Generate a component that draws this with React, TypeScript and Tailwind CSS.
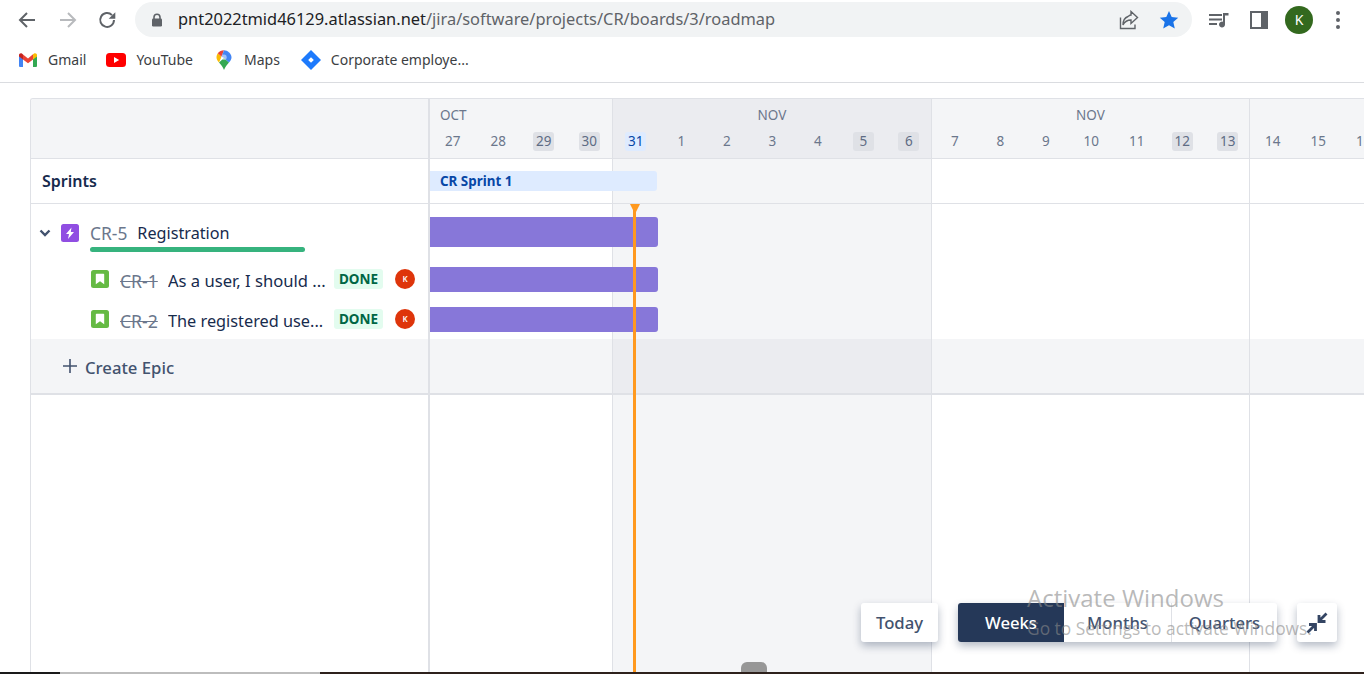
import React from "react";

const FONT = "font-['Noto_Sans','Open_Sans',sans-serif]";

function Day({ d, kind }: { d: string; kind?: "we" | "today" }) {
  return (
    <div className="w-[45.5px] shrink-0 flex justify-center">
      <span
        className={
          "h-[19px] w-[21px] rounded-[3px] flex items-center justify-center pt-[1px] text-[13.5px] leading-none " +
          (kind === "we"
            ? "bg-[#dfe1e6] text-[#5e6c84]"
            : kind === "today"
              ? "bg-[#deebff] text-[#0747a6]"
              : "text-[#6b778c]")
        }
      >
        {d}
      </span>
    </div>
  );
}

function WeekCol({
  width,
  month,
  monthLeft,
  days,
  shaded,
  last,
}: {
  width: string;
  month?: string;
  monthLeft?: boolean;
  days: { d: string; kind?: "we" | "today" }[];
  shaded?: boolean;
  last?: boolean;
}) {
  const bodyBg = shaded ? "bg-[#f4f5f7]" : "bg-white";
  const border = last ? "" : "border-r border-[#dfe1e6]";
  return (
    <div className={width + " flex flex-col " + (last ? "flex-1 min-w-0 overflow-hidden" : "shrink-0")}>
      <div className={"h-[60px] border-b border-[#dfe1e6] flex flex-col " + border + " " + (shaded ? "bg-[#ebecf0]" : "bg-[#f4f5f7]")}>
        <div className={"h-[33px] pt-[7px] text-[13.5px] leading-[18px] text-[#6b778c] " + (monthLeft ? "pl-[10px]" : "text-center")}>
          {month}
        </div>
        <div className="flex">
          {days.map((x) => (
            <Day key={x.d} d={x.d} kind={x.kind} />
          ))}
        </div>
      </div>
      <div className={"h-[45px] border-b border-[#dfe1e6] " + border + " " + bodyBg} />
      <div className={"h-[135px] " + border + " " + bodyBg} />
      <div className={"h-[56px] border-b-2 border-[#dfe1e6] " + border + " " + (shaded ? "bg-[#ebecf0]" : "bg-[#f4f5f7]")} />
      <div className={"flex-1 " + border + " " + bodyBg} />
    </div>
  );
}

function StoryIcon() {
  return (
    <svg width="18" height="18" viewBox="0 0 18 18" className="shrink-0">
      <rect width="18" height="18" rx="2.5" fill="#65ba43" />
      <path d="M5.5 3.8h7a.7.7 0 0 1 .7.7v9.7L9 11.2l-4.2 3V4.5a.7.7 0 0 1 .7-.7z" fill="#fff" />
    </svg>
  );
}

function StoryRow({ id, title, titleSize }: { id: string; title: string; titleSize: string }) {
  return (
    <div className="h-[40px] flex items-center pl-[60px]">
      <StoryIcon />
      <span className="ml-[11px] pt-[3px] w-[48px] shrink-0 text-[17.6px] leading-[24px] text-[#6b778c] line-through">{id}</span>
      <span className={"w-[166px] pt-[3px] shrink-0 leading-[24px] text-[#172b4d] whitespace-nowrap overflow-hidden " + titleSize}>{title}</span>
      <span className="h-[20px] w-[49px] shrink-0 rounded-[3px] bg-[#e3fcef] text-[#006644] text-[13.5px] font-bold flex items-center justify-center">
        DONE
      </span>
      <span className="ml-[12px] h-[20px] w-[20px] shrink-0 rounded-full bg-[#de350b] text-white text-[8px] font-semibold flex items-center justify-center">
        K
      </span>
    </div>
  );
}

function Bookmark({ icon, label, gap }: { icon: React.ReactNode; label: string; gap: string }) {
  return (
    <div className={"flex items-center " + gap}>
      {icon}
      <span className="text-[14px] text-[#3c4043] leading-none whitespace-nowrap">{label}</span>
    </div>
  );
}

export default function App() {
  return (
    <div className={"h-[674px] w-[1364px] overflow-hidden flex flex-col bg-white relative " + FONT}>
      {/* Browser toolbar */}
      <div className="h-[39px] shrink-0 flex items-center pl-[17px]">
        <svg width="20" height="20" viewBox="0 0 20 20" fill="none" stroke="#5f6368" strokeWidth="2">
          <path d="M18 10H3M10 3l-7 7 7 7" />
        </svg>
        <svg width="20" height="20" viewBox="0 0 20 20" fill="none" stroke="#b8babd" strokeWidth="2" className="ml-[21px]">
          <path d="M2 10h15M10 3l7 7-7 7" />
        </svg>
        <svg width="20" height="20" viewBox="0 0 20 20" fill="none" className="ml-[20px]">
          <path d="M16 10a6.9 6.9 0 1 1-2-4.9" stroke="#5f6368" strokeWidth="2" />
          <path d="M17.3 2.2v6.6h-6.6z" fill="#5f6368" />
        </svg>
        <div className="ml-[17px] h-[35px] w-[1057px] rounded-full bg-[#f1f3f4] flex items-center pl-[16px] pr-[13px]">
          <svg width="12" height="14" viewBox="0 0 12 14" className="shrink-0">
            <path d="M3 6V4.2a3 3 0 0 1 6 0V6" fill="none" stroke="#5f6368" strokeWidth="1.6" />
            <rect x="1" y="5.5" width="10" height="8" rx="1.2" fill="#5f6368" />
          </svg>
          <div className="ml-[15px] text-[16.4px] leading-none whitespace-nowrap text-[#5f6368]">
            <span className="text-[#202124]">pnt2022tmid46129.atlassian.net</span>/jira/software/projects/CR/boards/3/roadmap
          </div>
          <div className="ml-auto flex items-center">
            <svg width="20" height="20" viewBox="0 0 20 20" fill="none" stroke="#5f6368" strokeWidth="1.4">
              <path d="M1.5 7.5v11h14.5v-4M9 6.5C5 8 4 11.5 4 15c1.500-3 4-5 8-5v3.500l6.500-6L12 1.500V5c-1 0-2 .8-3 1.500z" />
            </svg>
            <svg width="20" height="20" viewBox="0 0 20 20" className="ml-[20px]">
              <path d="M10 1l2.700 6.100 6.500.6-4.900 4.400 1.500 6.500L10 15.200l-5.800 3.400 1.500-6.500L.8 7.700l6.500-.6z" fill="#1a73e8" />
            </svg>
          </div>
        </div>
        <svg width="22" height="18" viewBox="0 0 22 18" fill="#5f6368" className="ml-[16px]">
          <path d="M1 3h13v2H1zM1 7.500h13v2H1zM1 12h8v2H1z" />
          <path d="M15 2h5.500v2.500H17V13.500a3 3 0 1 1-2-2.800z" />
        </svg>
        <svg width="18" height="18" viewBox="0 0 18 18" className="ml-[20px]">
          <path d="M0 0h18v18H0z" fill="#5f6368" />
          <path d="M2 2h9v14H2z" fill="#fff" />
        </svg>
        <div className="ml-[17px] h-[28px] w-[28px] rounded-full bg-[#33691e] text-white text-[14px] flex items-center justify-center">
          K
        </div>
        <div className="ml-[23px] flex flex-col gap-[3px]">
          <span className="h-[4px] w-[4px] rounded-full bg-[#5f6368]" />
          <span className="h-[4px] w-[4px] rounded-full bg-[#5f6368]" />
          <span className="h-[4px] w-[4px] rounded-full bg-[#5f6368]" />
        </div>
      </div>

      {/* Bookmarks */}
      <div className="h-[44px] shrink-0 border-b border-[#dadce0] flex items-center pl-[19px] pb-[2px]">
        <Bookmark
          gap="gap-[11px]"
          label="Gmail"
          icon={
            <svg width="18" height="14" viewBox="0 0 18 14">
              <path d="M0 2.500V13a1 1 0 0 0 1 1h3V6z" fill="#4285f4" />
              <path d="M18 2.500V13a1 1 0 0 1-1 1h-3V6z" fill="#34a853" />
              <path d="M14 1.200V6.500L18 3.500V2c0-1.500-1.700-2.300-2.900-1.500z" fill="#fbbc04" />
              <path d="M4 6.500V1.500L9 5.500l5-4.300v5.300L9 10.300z" fill="#ea4335" />
              <path d="M0 2v1.500l4 3V1.500L2.900.500C1.700-.300 0 .500 0 2z" fill="#c5221f" />
            </svg>
          }
        />
        <div className="ml-[20px]">
          <Bookmark
            gap="gap-[10px]"
            label="YouTube"
            icon={
              <svg width="20" height="14" viewBox="0 0 20 14">
                <rect width="20" height="14" rx="3.500" fill="#f00" />
                <path d="M8 4l5.200 3L8 10z" fill="#fff" />
              </svg>
            }
          />
        </div>
        <div className="ml-[23px]">
          <Bookmark
            gap="gap-[12px]"
            label="Maps"
            icon={
              <svg width="16" height="20" viewBox="0 0 16 20">
                <path d="M8 20c-1-3-3-5-5-7.500L8 8l5 4.500C11 15 9 17 8 20z" fill="#34a853" />
                <path d="M1.800 3.200L5.500 6.800 3 12.500C1.500 10.800.5 9 .5 7.500c0-1.700.5-3.100 1.300-4.300z" fill="#fbbc04" />
                <path d="M1.800 3.200C3.200 1.300 5.400.2 8 .2L5.500 6.800z" fill="#ea4335" />
                <path d="M8 .2c1.800 0 3.700.7 5 2L10.500 9 5.500 6.800z" fill="#4285f4" />
                <path d="M13 2.200c1.500 1.400 2.500 3.300 2.500 5.300 0 1.700-1 3.300-2.500 5L8 8z" fill="#4285f4" />
                <circle cx="8" cy="7.300" r="2.700" fill="#fff" fillOpacity="0.5" />
              </svg>
            }
          />
        </div>
        <div className="ml-[21px]">
          <Bookmark
            gap="gap-[10px]"
            label="Corporate employe..."
            icon={
              <svg width="20" height="20" viewBox="0 0 20 20">
                <path d="M10 0l10 10-10 10L0 10z" fill="#1d7afc" />
                <rect x="8" y="8" width="4" height="4" fill="#fff" transform="rotate(45 10 10)" />
              </svg>
            }
          />
        </div>
      </div>

      {/* Page */}
      <div className="flex-1 min-h-0 pl-[30px] pt-[15px]">
        <div className="h-full flex border-l border-t border-[#dfe1e6] rounded-tl-[3px] overflow-hidden relative">
          {/* Left panel */}
          <div className="w-[399px] shrink-0 flex flex-col border-r-2 border-[#dfe1e6]">
            <div className="h-[60px] shrink-0 bg-[#f4f5f7] border-b border-[#dfe1e6]" />
            <div className="h-[45px] shrink-0 border-b border-[#dfe1e6] flex items-center pl-[11px] text-[16px] font-semibold text-[#172b4d]">
              Sprints
            </div>
            <div className="h-[55px] shrink-0 flex flex-col pt-[17px]">
              <div className="flex items-center pl-[8px] h-[24px]">
                <svg width="12" height="8" viewBox="0 0 12 8" fill="none" stroke="#42526e" strokeWidth="2.400" className="shrink-0">
                  <path d="M1.500 1.500L6 6l4.500-4.500" />
                </svg>
                <svg width="18" height="18" viewBox="0 0 18 18" className="ml-[10px] shrink-0">
                  <rect width="18" height="18" rx="2.500" fill="#904ee2" />
                  <path d="M10.500 3.500L5 10h3l-1 5 6-7H9.800z" fill="#fff" />
                </svg>
                <span className="ml-[11px] text-[17.4px] text-[#6b778c]">CR-5</span>
                <span className="ml-[10px] text-[16.2px] text-[#172b4d]">Registration</span>
              </div>
              <div className="ml-[59px] mt-[2px] h-[5px] w-[215px] rounded-full bg-[#36b37e]" />
            </div>
            <StoryRow id="CR-1" title="As a user, I should ..." titleSize="text-[16.6px]" />
            <StoryRow id="CR-2" title="The registered use..." titleSize="text-[16.3px]" />
            <div className="h-[56px] shrink-0 bg-[#f4f5f7] border-b-2 border-[#dfe1e6] flex items-center pl-[31px]">
              <svg width="16" height="16" viewBox="0 0 16 16" stroke="#42526e" strokeWidth="1.600">
                <path d="M8 1v14M1 8h14" />
              </svg>
              <span className="ml-[7px] pt-[3px] text-[16.7px] font-medium text-[#42526e]">Create Epic</span>
            </div>
            <div className="flex-1" />
          </div>

          {/* Timeline */}
          <div className="flex-1 min-w-0 flex relative overflow-hidden">
            <WeekCol
              width="w-[183px]"
              month="OCT"
              monthLeft
              days={[{ d: "27" }, { d: "28" }, { d: "29", kind: "we" }, { d: "30", kind: "we" }]}
            />
            <WeekCol
              width="w-[319px]"
              month="NOV"
              shaded
              days={[
                { d: "31", kind: "today" },
                { d: "1" },
                { d: "2" },
                { d: "3" },
                { d: "4" },
                { d: "5", kind: "we" },
                { d: "6", kind: "we" },
              ]}
            />
            <WeekCol
              width="w-[318px]"
              month="NOV"
              days={[
                { d: "7" },
                { d: "8" },
                { d: "9" },
                { d: "10" },
                { d: "11" },
                { d: "12", kind: "we" },
                { d: "13", kind: "we" },
              ]}
            />
            <WeekCol width="w-auto" last days={[{ d: "14" }, { d: "15" }, { d: "16" }]} />

            {/* Gantt bars */}
            <div className="absolute left-0 top-[72px] h-[20px] w-[227px] rounded-r-[3px] bg-[#deebff] pl-[10px] text-[13.4px] leading-[21px] font-bold text-[#0747a6]">
              CR Sprint 1
            </div>
            <div className="absolute left-0 top-[118px] h-[30px] w-[228px] rounded-r-[3px] bg-[#8777d9]" />
            <div className="absolute left-0 top-[168px] h-[25px] w-[228px] rounded-r-[3px] bg-[#8777d9]" />
            <div className="absolute left-0 top-[208px] h-[25px] w-[228px] rounded-r-[3px] bg-[#8777d9]" />
            <div className="absolute left-[203px] top-[105px] bottom-0 w-[3px] bg-[#ff991f]" />
            <svg width="10" height="10" viewBox="0 0 10 10" className="absolute left-[199.500px] top-[105px]">
              <path d="M0 0h10L5 10z" fill="#ff991f" />
            </svg>
            <div className="absolute left-[311px] bottom-0 h-[12px] w-[26px] rounded-t-[6px] bg-[#979797]" />
          </div>
        </div>
      </div>

      {/* Timeline controls */}
      <div className="absolute left-[861px] top-[603px] flex text-[16.7px] font-medium text-[#42526e]">
        <div className="h-[39px] w-[77px] pt-[1px] rounded-[3px] bg-white shadow-[0_4px_8px_rgba(9,30,66,0.3)] flex items-center justify-center">
          Today
        </div>
        <div className="ml-[20px] h-[39px] w-[319px] rounded-[3px] bg-white shadow-[0_4px_8px_rgba(9,30,66,0.3)] flex overflow-hidden">
          <div className="w-[106px] pt-[1px] bg-[#253858] text-white flex items-center justify-center">Weeks</div>
          <div className="w-[107px] pt-[1px] flex items-center justify-center">Months</div>
          <div className="w-[106px] pt-[1px] flex items-center justify-center border-l border-[#dfe1e6]">Quarters</div>
        </div>
        <div className="ml-[20px] h-[39px] w-[40px] rounded-[3px] bg-white shadow-[0_4px_8px_rgba(9,30,66,0.3)] flex items-center justify-center">
          <svg width="22" height="22" viewBox="0 0 22 22" fill="none" stroke="#344563" strokeWidth="2.800">
            <path d="M20.500 1.500L14 8M13 3v6.500h6.500M1.500 20.500L8 14M3 12.500h6.500V19" />
          </svg>
        </div>
      </div>

      {/* Windows watermark */}
      <div className="absolute left-[1027px] top-[582px] text-[24px] leading-[32px] text-[#8a8a8a]/60 whitespace-nowrap pointer-events-none font-['Open_Sans',sans-serif]">
        Activate Windows
      </div>
      <div className="absolute left-[1027px] top-[617px] text-[17.4px] leading-[22px] text-[#8a8a8a]/60 whitespace-nowrap pointer-events-none font-['Open_Sans',sans-serif]">
        Go to Settings to activate Windows.
      </div>

      {/* Bottom strip */}
      <div className="absolute left-0 right-0 bottom-0 h-[2px] flex">
        <div className="w-[60px] bg-[#1a1a1a]" />
        <div className="w-[260px] bg-[#bdbdbd]" />
        <div className="flex-1 bg-[#2e211c]" />
      </div>
    </div>
  );
}
